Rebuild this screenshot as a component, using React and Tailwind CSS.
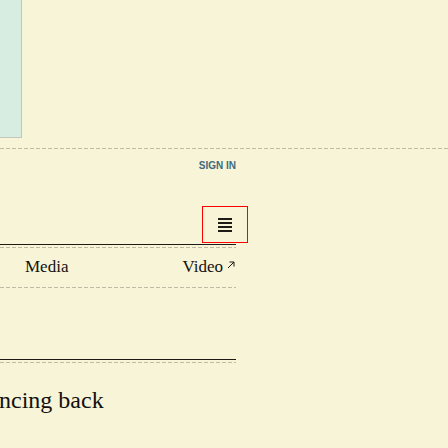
import React from 'react';

const Dashed = ({ className = '' }) => (
  <div
    className={`h-px bg-[repeating-linear-gradient(90deg,#bdbaa5_0px,#bdbaa5_4px,transparent_4px,transparent_6px)] ${className}`}
  ></div>
);

const App = () => {
  return (
    <div className="w-[448px] h-[448px] overflow-hidden bg-[#f8f4d7] font-['Liberation_Serif',serif] text-[#121110]">
      {/* Top strip */}
      <div className="w-[22px] h-[138px] bg-[#d7ede1] border-r border-b border-[#c4c6bb]"></div>
      <Dashed className="mt-[10px] w-[448px]" />

      {/* Sign in */}
      <div className="w-[236px] mt-[11px] flex justify-end">
        <span className="font-['Liberation_Sans',sans-serif] text-[10px] leading-[12px] font-bold text-[#3e6b7d]">
          SIGN IN
        </span>
      </div>

      {/* Menu button */}
      <div className="w-[248px] mt-[34px] flex justify-end">
        <button className="w-[46px] h-[37px] border border-[#ff0000] flex flex-col items-center justify-center gap-[2px]">
          <span className="block w-[14px] h-[2px] bg-[#1e1b16]"></span>
          <span className="block w-[14px] h-[2px] bg-[#1e1b16]"></span>
          <span className="block w-[14px] h-[2px] bg-[#1e1b16]"></span>
          <span className="block w-[14px] h-[2px] bg-[#1e1b16]"></span>
        </button>
      </div>

      {/* Nav */}
      <div className="w-[236px] mt-px h-px bg-[#1e1b16]"></div>
      <Dashed className="mt-[2px] w-[236px]" />
      <div className="w-[236px] mt-[10px] pl-[25px] pr-px flex justify-between items-center text-[17px] leading-[17px]">
        <span>Media</span>
        <span className="flex items-center">
          Video
          <svg width="8" height="8" viewBox="0 0 8 8" className="ml-[4px] -mt-[3px]" fill="none" stroke="#1c1a17" strokeWidth="1">
            <path d="M1 7 L7 1 M2.5 1 H7 V5.5" />
          </svg>
        </span>
      </div>
      <Dashed className="mt-[12px] w-[236px]" />

      {/* Headline section */}
      <div className="w-[236px] mt-[71px] h-px bg-[#1e1b16]"></div>
      <Dashed className="mt-[2px] w-[236px]" />
      <h2 className="mt-[25px] -ml-px text-[24px] leading-[24px] font-normal whitespace-nowrap">
        ncing back
      </h2>
    </div>
  );
};

export default App;
